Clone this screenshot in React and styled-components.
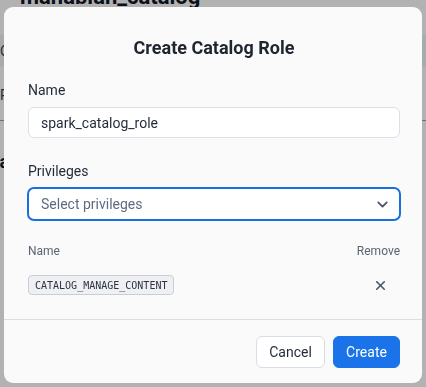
import React from 'react'
import styled, { createGlobalStyle } from 'styled-components'
import { ChevronDown, X } from 'lucide-react'

const GlobalStyle = createGlobalStyle`
  html, body {
    margin: 0;
    padding: 0;
    background: #ffffff;
    font-family: Roboto, "Liberation Sans", Arial, sans-serif;
  }
  * {
    box-sizing: border-box;
  }
`

const Page = styled.div`
  width: 426px;
  height: 387px;
  overflow: hidden;
  background: #ffffff;
`

const PageTitle = styled.h1`
  margin: -15px 0 0 20px;
  font-size: 22px;
  line-height: 24px;
  font-weight: 700;
  color: #111827;
`

const TabBar = styled.div`
  margin-top: 26px;
  height: 32px;
  background: #f3f4f6;
  font-size: 14px;
  line-height: 32px;
  color: #374151;
`

const PageRow = styled.div`
  height: ${(p) => p.h}px;
  border-bottom: ${(p) => (p.line ? '1px solid #9ca3af' : 'none')};
  font-size: 14px;
  color: #374151;
  padding-top: ${(p) => p.pt || 0}px;
`

const BoldText = styled.div`
  font-size: 18px;
  font-weight: 700;
  color: #111827;
  margin-top: 30px;
  margin-left: -10px;
`

const Overlay = styled.div`
  position: fixed;
  inset: 0;
  background: rgba(0, 0, 0, 0.3);
  display: flex;
  justify-content: center;
  align-items: flex-start;
  padding-top: 7px;
`

const Modal = styled.div`
  width: 418px;
  height: 376px;
  background: #fafafa;
  border-radius: 9px;
  display: flex;
  flex-direction: column;
  overflow: hidden;
`

const Header = styled.div`
  padding: 29px 22px 0 24px;
`

const Title = styled.h2`
  margin: 0;
  text-align: center;
  font-size: 18px;
  line-height: 24px;
  font-weight: 700;
  color: #1f2430;
`

const Body = styled.div`
  padding: 20px 22px 24px 24px;
  display: flex;
  flex-direction: column;
`

const Label = styled.label`
  display: block;
  margin-top: ${(p) => p.mt || 0}px;
  font-size: 14px;
  line-height: 20px;
  color: #1f2937;
`

const TextInput = styled.div`
  margin-top: 7px;
  height: 31px;
  border: 1px solid #dde0ea;
  border-radius: 6px;
  background: #ffffff;
  padding: 0 12px;
  display: flex;
  align-items: center;
  font-size: 14px;
  color: #1f2937;
`

const SelectBox = styled.div`
  margin: 6px -1px 0 -1px;
  height: 34px;
  border: 2px solid #1a6fe0;
  border-radius: 7px;
  background: #ffffff;
  padding: 0 8px 0 12px;
  display: flex;
  align-items: center;
  justify-content: space-between;
  font-size: 14px;
  color: #5f6b80;
`

const TableHead = styled.div`
  margin-top: 22px;
  display: flex;
  justify-content: space-between;
  font-size: 12px;
  line-height: 16px;
  color: #5b6475;
`

const TableRow = styled.div`
  margin-top: 16px;
  height: 20px;
  display: flex;
  align-items: center;
  justify-content: space-between;
`

const Chip = styled.span`
  height: 20px;
  padding: 0 6px;
  display: inline-flex;
  align-items: center;
  border: 1px solid #c9cdd6;
  border-radius: 4px;
  background: #eef0f4;
  font-family: "DejaVu Sans Mono", "Liberation Mono", monospace;
  font-size: 10px;
  color: #2d3340;
`

const RemoveButton = styled.span`
  width: 40px;
  display: flex;
  justify-content: center;
  color: #4b5563;
`

const Footer = styled.div`
  border-top: 1px solid #dcdce4;
  padding: 16px 22px 16px 24px;
  display: flex;
  justify-content: flex-end;
  gap: 8px;
`

const Button = styled.button`
  height: 32px;
  width: ${(p) => (p.primary ? 67 : 69)}px;
  padding: 0;
  border-radius: 6px;
  border: 1px solid ${(p) => (p.primary ? '#1a73e8' : '#d9dde6')};
  background: ${(p) => (p.primary ? '#1a73e8' : '#ffffff')};
  color: ${(p) => (p.primary ? '#ffffff' : '#1f2937')};
  font-family: Roboto, "Liberation Sans", Arial, sans-serif;
  font-size: 14px;
`

const App = () => {
  return (
    <>
      <GlobalStyle />
      <Page>
        <PageTitle>manabian_catalog</PageTitle>
        <TabBar>Overview</TabBar>
        <PageRow h={54} line pt={20}>Roles</PageRow>
        <BoldText>catalog</BoldText>
      </Page>
      <Overlay>
        <Modal>
          <Header>
            <Title>Create Catalog Role</Title>
          </Header>
          <Body>
            <Label>Name</Label>
            <TextInput>spark_catalog_role</TextInput>
            <Label mt={23}>Privileges</Label>
            <SelectBox>
              Select privileges
              <ChevronDown size={17} strokeWidth={2.5} color="#4b5563" />
            </SelectBox>
            <TableHead>
              <span>Name</span>
              <span>Remove</span>
            </TableHead>
            <TableRow>
              <Chip>CATALOG_MANAGE_CONTENT</Chip>
              <RemoveButton>
                <X size={15} strokeWidth={2.6} />
              </RemoveButton>
            </TableRow>
          </Body>
          <Footer>
            <Button>Cancel</Button>
            <Button primary>Create</Button>
          </Footer>
        </Modal>
      </Overlay>
    </>
  )
}

export default App
